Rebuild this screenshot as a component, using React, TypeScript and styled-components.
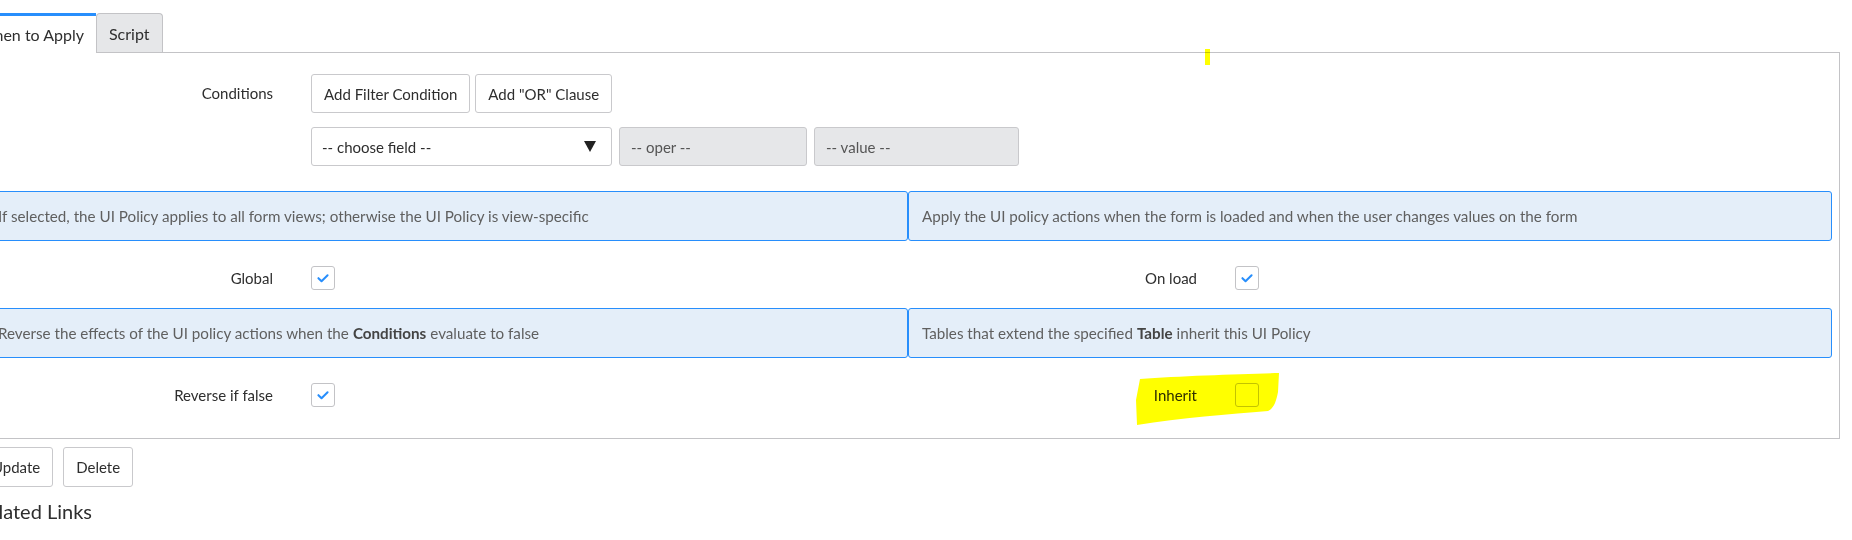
import React from 'react';
import styled, { createGlobalStyle } from 'styled-components';

const GlobalStyle = createGlobalStyle`
  html, body {
    margin: 0;
    padding: 0;
    background: #fff;
    overflow: hidden;
  }
  body {
    font-family: Lato, "Open Sans", Arial, sans-serif;
    color: #2e2e2e;
  }
`;

const BLUE = '#278efc';

type Field = {
  info: React.ReactNode;
  label: string;
  checked: boolean;
};

const leftFields: Field[] = [
  {
    info: 'If selected, the UI Policy applies to all form views; otherwise the UI Policy is view-specific',
    label: 'Global',
    checked: true,
  },
  {
    info: (
      <>
        Reverse the effects of the UI policy actions when the <b>Conditions</b> evaluate to false
      </>
    ),
    label: 'Reverse if false',
    checked: true,
  },
];

const rightFields: Field[] = [
  {
    info: 'Apply the UI policy actions when the form is loaded and when the user changes values on the form',
    label: 'On load',
    checked: true,
  },
  {
    info: (
      <>
        Tables that extend the specified <b>Table</b> inherit this UI Policy
      </>
    ),
    label: 'Inherit',
    checked: false,
  },
];

function Checkbox({ checked }: { checked: boolean }) {
  return (
    <Box>
      {checked && (
        <svg width="24" height="24" viewBox="0 0 24 24">
          <path d="M7 12.2l3.4 3.4L17 9" fill="none" stroke={BLUE} strokeWidth="2.2" strokeLinecap="round" strokeLinejoin="round" />
        </svg>
      )}
    </Box>
  );
}

function FieldColumn({ fields }: { fields: Field[] }) {
  return (
    <Column>
      {fields.map((f) => (
        <React.Fragment key={f.label}>
          <InfoBox>{f.info}</InfoBox>
          <CheckRow>
            <FieldLabel>{f.label}</FieldLabel>
            <Checkbox checked={f.checked} />
          </CheckRow>
        </React.Fragment>
      ))}
    </Column>
  );
}

export default function App() {
  return (
    <Page>
      <GlobalStyle />
      <TabBar>
        <Tab $active>When to Apply</Tab>
        <Tab>Script</Tab>
      </TabBar>
      <Panel>
        <ConditionsRow>
          <FieldLabel>Conditions</FieldLabel>
          <Controls>
            <ButtonRow>
              <Button>Add Filter Condition</Button>
              <Button>Add "OR" Clause</Button>
            </ButtonRow>
            <FilterRow>
              <SelectBox>
                -- choose field --
                <svg width="12" height="11" viewBox="0 0 12 11">
                  <path d="M0 0h12L6 11z" fill="#222" />
                </svg>
              </SelectBox>
              <DisabledBox $width={188}>-- oper --</DisabledBox>
              <DisabledBox $width={205}>-- value --</DisabledBox>
            </FilterRow>
          </Controls>
        </ConditionsRow>
        <TwoCol>
          <FieldColumn fields={leftFields} />
          <FieldColumn fields={rightFields} />
        </TwoCol>
      </Panel>
      <ActionRow>
        <Button $tall>Update</Button>
        <Button $tall>Delete</Button>
      </ActionRow>
      <Heading>Related Links</Heading>
      <LinkRow>
        <Link>Show Related Policies</Link>
        <Link>Run Policy</Link>
      </LinkRow>
      <Marker width="1900" height="540" viewBox="0 0 1900 540">
        <g transform="translate(24 0)" fill="#ffff00">
          <rect x="1205" y="49" width="5" height="16" />
          <path d="M1140 379 C1180 376 1240 374 1279 373 L1278 392 C1276 402 1274 408 1268 411 C1230 414 1180 418 1137 425 L1136 400 Z" />
        </g>
      </Marker>
    </Page>
  );
}

const Page = styled.div`
  position: relative;
  width: 1864px;
  margin-left: -24px;
  height: 540px;
  overflow: hidden;
  font-size: 15px;
`;

const TabBar = styled.div`
  display: flex;
  align-items: flex-start;
  height: 40px;
  margin-top: 13px;
  margin-bottom: -1px;
  position: relative;
  z-index: 1;
`;

const Tab = styled.div<{ $active?: boolean }>`
  box-sizing: border-box;
  display: flex;
  align-items: center;
  font-size: 16px;
  padding: 0 12px;
  color: #2e2e2e;
  ${(p) =>
    p.$active
      ? `
    height: 40px;
    background: #fff;
    border-top: 3px solid ${BLUE};
    border-bottom: 1px solid #fff;
    padding-left: 0;
    margin-left: 2px;
  `
      : `
    height: 39px;
    background: #e6e7e9;
    border: 1px solid #c3c3c6;
    border-bottom: none;
    border-radius: 4px 4px 0 0;
  `}
`;

const Panel = styled.div`
  box-sizing: border-box;
  width: 1864px;
  border: 1px solid #c3c3c6;
  padding: 21px 7px 13px;
`;

const ConditionsRow = styled.div`
  display: grid;
  grid-template-columns: 327px 1fr;
`;

const FieldLabel = styled.div`
  box-sizing: border-box;
  width: 327px;
  padding-right: 38px;
  text-align: right;
  font-size: 15px;
  color: #2e2e2e;
  line-height: 39px;
`;

const Controls = styled.div`
  display: flex;
  flex-direction: column;
  gap: 14px;
`;

const ButtonRow = styled.div`
  display: flex;
  gap: 5px;
`;

const Button = styled.button<{ $tall?: boolean }>`
  box-sizing: border-box;
  height: ${(p) => (p.$tall ? 40 : 39)}px;
  padding: 0 12px;
  background: #fff;
  border: 1px solid #c9c9cc;
  border-radius: 3px;
  font-family: inherit;
  font-size: 15px;
  color: #2e2e2e;
`;

const FilterRow = styled.div`
  display: flex;
  gap: 7px;
`;

const SelectBox = styled.div`
  box-sizing: border-box;
  width: 301px;
  height: 39px;
  display: flex;
  align-items: center;
  justify-content: space-between;
  padding: 0 15px 0 10px;
  border: 1px solid #c9c9cc;
  border-radius: 3px;
  background: #fff;
  color: #2e2e2e;
`;

const DisabledBox = styled.div<{ $width: number }>`
  box-sizing: border-box;
  width: ${(p) => p.$width}px;
  height: 39px;
  display: flex;
  align-items: center;
  padding: 0 11px;
  border: 1px solid #c9c9cc;
  border-radius: 3px;
  background: #e6e7e9;
  color: #555;
`;

const TwoCol = styled.div`
  display: grid;
  grid-template-columns: 924px 924px;
  margin-top: 25px;
`;

const Column = styled.div`
  display: flex;
  flex-direction: column;
`;

const InfoBox = styled.div`
  box-sizing: border-box;
  height: 50px;
  display: flex;
  align-items: center;
  padding: 0 13px;
  background: #e4eef9;
  border: 1px solid ${BLUE};
  border-radius: 3px;
  color: #5f5f5f;
  font-size: 15.2px;

  b {
    font-weight: 700;
    color: #444;
    margin: 0 4px;
  }
`;

const CheckRow = styled.div`
  box-sizing: border-box;
  height: 67px;
  display: flex;
  align-items: center;
  padding: 7px 0 0;
`;

const Box = styled.div`
  box-sizing: border-box;
  width: 24px;
  height: 24px;
  border: 1px solid #c3c3c6;
  border-radius: 3px;
  background: #fff;
  display: flex;
  align-items: center;
  justify-content: center;

  svg {
    display: block;
  }
`;

const ActionRow = styled.div`
  display: flex;
  gap: 10px;
  margin-top: 8px;
  padding-left: 3px;
`;

const Heading = styled.h2`
  margin: 9px 0 0;
  font-size: 20px;
  font-weight: 400;
  line-height: 30px;
  color: #2e2e2e;
`;

const LinkRow = styled.div`
  display: flex;
  gap: 24px;
  margin-top: 11px;
  font-size: 15px;
  line-height: 20px;
`;

const Link = styled.a`
  color: ${BLUE};
`;

const Marker = styled.svg`
  position: absolute;
  left: 0;
  top: 0;
  pointer-events: none;
  mix-blend-mode: multiply;
`;
